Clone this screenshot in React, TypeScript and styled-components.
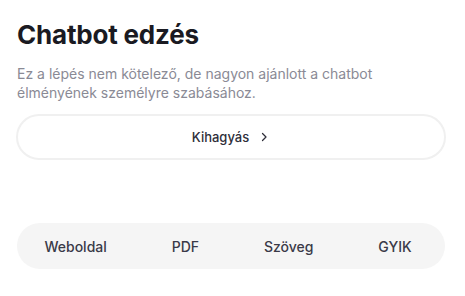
import * as React from 'react';
import styled, {createGlobalStyle} from 'styled-components';

const GlobalStyle = createGlobalStyle`
  html, body {
    margin: 0;
    padding: 0;
    background: #ffffff;
    font-family: Inter, "Noto Sans", sans-serif;
  }
`;

const Page = styled.div`
  display: flex;
  flex-direction: column;
  width: 465px;
  box-sizing: border-box;
  padding: 19px 19px 0 16px;
`;

const Title = styled.h1`
  margin: 0 0 0 1px;
  font-size: 26px;
  line-height: 32px;
  font-weight: 700;
  color: #1a1a22;
  letter-spacing: -0.2px;
`;

const Subtitle = styled.p`
  margin: 13px 0 0 1px;
  font-size: 14px;
  line-height: 19px;
  color: #8a8a95;
  max-width: 380px;
`;

const SkipButton = styled.button`
  display: flex;
  align-items: center;
  justify-content: center;
  gap: 9px;
  margin-top: 12px;
  height: 46px;
  width: 100%;
  box-sizing: border-box;
  border: 2px solid #f0f0f0;
  border-radius: 23px;
  background: #fff;
  font-family: inherit;
  font-size: 13px;
  font-weight: 500;
  color: #2e2e3a;
  cursor: pointer;
`;

const TabBar = styled.div`
  display: flex;
  gap: 10px;
  margin: 63px 1px 0 1px;
  padding-right: 6px;
  height: 46px;
  border-radius: 23px;
  background: #f5f5f5;
`;

const Tab = styled.div<{$active?: boolean}>`
  position: relative;
  flex: 1 1 auto;
  display: flex;
  align-items: center;
  justify-content: center;
  font-size: 14px;
  font-weight: 500;
  color: #3a3a48;

  &::after {
    content: '';
    display: ${p => (p.$active ? 'block' : 'none')};
    position: absolute;
    left: 14px;
    right: 8px;
    bottom: -4px;
    height: 2px;
    background: #f8f8f8;
  }
`;

const Chevron = () => (
  <svg width="12" height="12" viewBox="0 0 24 24" fill="none" stroke="#2e2e3a" strokeWidth="2.5" strokeLinecap="round" strokeLinejoin="round">
    <path d="M9 5l7 7-7 7" />
  </svg>
);

const tabs = ['Weboldal', 'PDF', 'Szöveg', 'GYIK'];

export default function App() {
  return (
    <Page>
      <GlobalStyle />
      <Title>Chatbot edzés</Title>
      <Subtitle>Ez a lépés nem kötelező, de nagyon ajánlott a chatbot élményének személyre szabásához.</Subtitle>
      <SkipButton>
        Kihagyás
        <Chevron />
      </SkipButton>
      <TabBar>
        {tabs.map((t, i) => (
          <Tab key={t} $active={i === 0}>{t}</Tab>
        ))}
      </TabBar>
    </Page>
  );
}
